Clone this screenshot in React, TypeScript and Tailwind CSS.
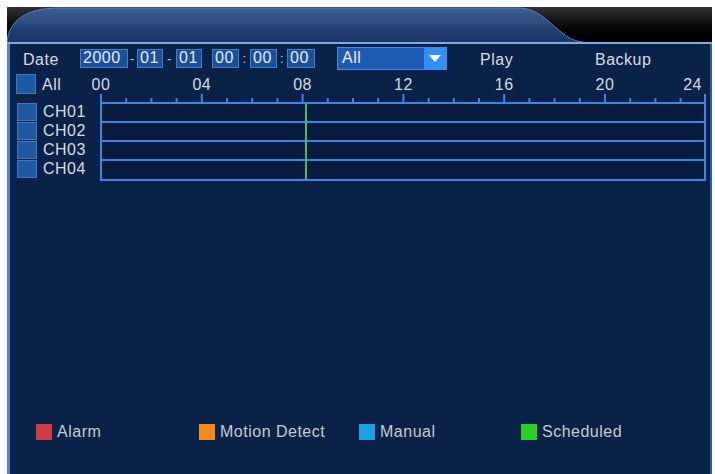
import React from 'react';

const hours = ['00', '04', '08', '12', '16', '20', '24'];
const channels = ['CH01', 'CH02', 'CH03', 'CH04'];
const legend = [
  { label: 'Alarm', color: 'bg-[#cf3b3b]', w: 'w-[163px]' },
  { label: 'Motion Detect', color: 'bg-[#f28c18]', w: 'w-[160px]' },
  { label: 'Manual', color: 'bg-[#1e9fe6]', w: 'w-[162px]' },
  { label: 'Scheduled', color: 'bg-[#2bcf2b]', w: 'w-[120px]' },
];

const HOUR = 604.8 / 24;

function Field({ value, w }: { value: string; w: string }) {
  return (
    <div
      className={`${w} h-[19px] flex items-center pl-[2px] bg-[#1b4f97] border border-[#3f7dd2] text-[#e4ebf3] text-[16px] leading-none`}
    >
      {value}
    </div>
  );
}

function Sep({ ch, w }: { ch: string; w: string }) {
  return <span className={`${w} text-center text-[#c9d3df] text-[13px] leading-none`}>{ch}</span>;
}

function Box({ h }: { h: string }) {
  return <div className={`w-[20px] ${h} bg-[#1d5a9f] border border-[#3878c4]`} />;
}

function Ruler() {
  const ticks = [];
  for (let i = 0; i <= 24; i++) {
    const major = i % 4 === 0;
    const x = Math.min(i * HOUR + 1, 605);
    ticks.push(
      <line key={i} x1={x} x2={x} y1={major ? 21 : 25} y2={29} stroke="#3a86dd" strokeWidth={2} />
    );
  }
  return (
    <div className="relative w-[606px] h-[29px]">
      {hours.map((h, i) => (
        <span
          key={h}
          className="absolute top-[4px] text-[16px] leading-none text-[#d3dae3] tracking-[0.5px]"
          style={
            i === hours.length - 1
              ? { right: 4 }
              : { left: i * 4 * HOUR + 1, transform: 'translateX(-50%)' }
          }
        >
          {h}
        </span>
      ))}
      <svg className="absolute inset-0" width="606" height="29">
        {ticks}
      </svg>
    </div>
  );
}

export default function App() {
  return (
    <div
      className="w-[715px] h-[474px] bg-white pt-[7px] pl-[7px] pr-[3px] flex flex-col overflow-hidden"
      style={{ fontFamily: '"Liberation Sans", Arial, sans-serif' }}
    >
      {/* top tab strip */}
      <div className="relative h-[35px] bg-gradient-to-b from-[#333333] via-[#0c0c0c] to-black">
        <svg className="absolute inset-0" width="705" height="35">
          <defs>
            <linearGradient id="tab" x1="0" y1="0" x2="0" y2="1">
              <stop offset="0" stopColor="#3d5d8e" />
              <stop offset="0.45" stopColor="#2c4b7e" />
              <stop offset="0.6" stopColor="#1f3d71" />
              <stop offset="1" stopColor="#1b376a" />
            </linearGradient>
          </defs>
          <path d="M0,35 C2,13 20,1 52,1 L512,1 C540,1 552,34 576,35 Z" fill="url(#tab)" />
          <path d="M0,35 C2,13 20,1 52,1 L512,1 C540,1 552,34 576,35" fill="none" stroke="#5b80b6" strokeWidth="1" />
        </svg>
      </div>
      <div className="h-[2px] bg-[#7fa9df]" />

      <div className="flex-1 flex flex-col bg-[#0a2248] border-l-[3px] border-l-[#4d86cf] border-r-2 border-r-[#2f5f9f] text-[#d6dce4] text-[16px] tracking-[0.5px]">
        {/* date / filter row */}
        <div className="flex items-center h-[24px] mt-[2px] pl-[13px]">
          <span className="w-[57px] pt-[4px]">Date</span>
          <Field value="2000" w="w-[48px]" />
          <Sep ch="-" w="w-[9px]" />
          <Field value="01" w="w-[26px]" />
          <Sep ch="-" w="w-[13px]" />
          <Field value="01" w="w-[26px]" />
          <span className="w-[10px]" />
          <Field value="00" w="w-[27px]" />
          <Sep ch=":" w="w-[11px]" />
          <Field value="00" w="w-[27px]" />
          <Sep ch=":" w="w-[10px]" />
          <Field value="00" w="w-[28px]" />
          <div className="ml-[22px] w-[110px] h-[23px] flex bg-[#1d5bb3] border border-[#4a8ae6]">
            <span className="flex-1 pl-[4px] flex items-center text-[#e8eef6]">All</span>
            <div className="w-[22px] flex items-center justify-center bg-[#2f92f2]">
              <svg width="12" height="7" viewBox="0 0 12 7">
                <path d="M0,0 L12,0 L6,7 Z" fill="#ffffff" />
              </svg>
            </div>
          </div>
          <span className="ml-[33px] w-[115px] pt-[4px]">Play</span>
          <span className="pt-[4px]">Backup</span>
        </div>

        {/* all + ruler */}
        <div className="flex items-end mt-[1px]">
          <div className="w-[90px] flex items-center pl-[6px] pb-[5px]">
            <Box h="h-[20px]" />
            <span className="ml-[6px] pt-[2px]">All</span>
          </div>
          <Ruler />
        </div>

        {/* channels */}
        <div className="flex">
          <div className="w-[90px] flex flex-col pl-[7px]">
            {channels.map((c, i) => (
              <div key={c} className={`flex items-center ${i === 3 ? 'h-[20px]' : 'h-[19px]'}`}>
                <Box h="h-[18px]" />
                <span className="ml-[6px] leading-none">{c}</span>
              </div>
            ))}
          </div>
          <div className="relative w-[606px] border-2 border-[#3b87e0] bg-[#061b3e] flex flex-col">
            <div className="h-[17px]" />
            <div className="h-[17px] border-t-2 border-[#3b87e0] box-content" />
            <div className="h-[17px] border-t-2 border-[#3b87e0] box-content" />
            <div className="h-[18px] border-t-2 border-[#3b87e0] box-content" />
            <div className="absolute top-0 bottom-0 left-[203px] w-[2px] bg-[#3fbf5c]" />
          </div>
        </div>

        {/* legend */}
        <div className="mt-auto mb-[30px] flex items-center pl-[26px] text-[#c3cbd4]">
          {legend.map((l) => (
            <div key={l.label} className={`${l.w} flex items-center`}>
              <span className={`w-4 h-4 ${l.color}`} />
              <span className="ml-[5px]">{l.label}</span>
            </div>
          ))}
        </div>
      </div>
    </div>
  );
}
